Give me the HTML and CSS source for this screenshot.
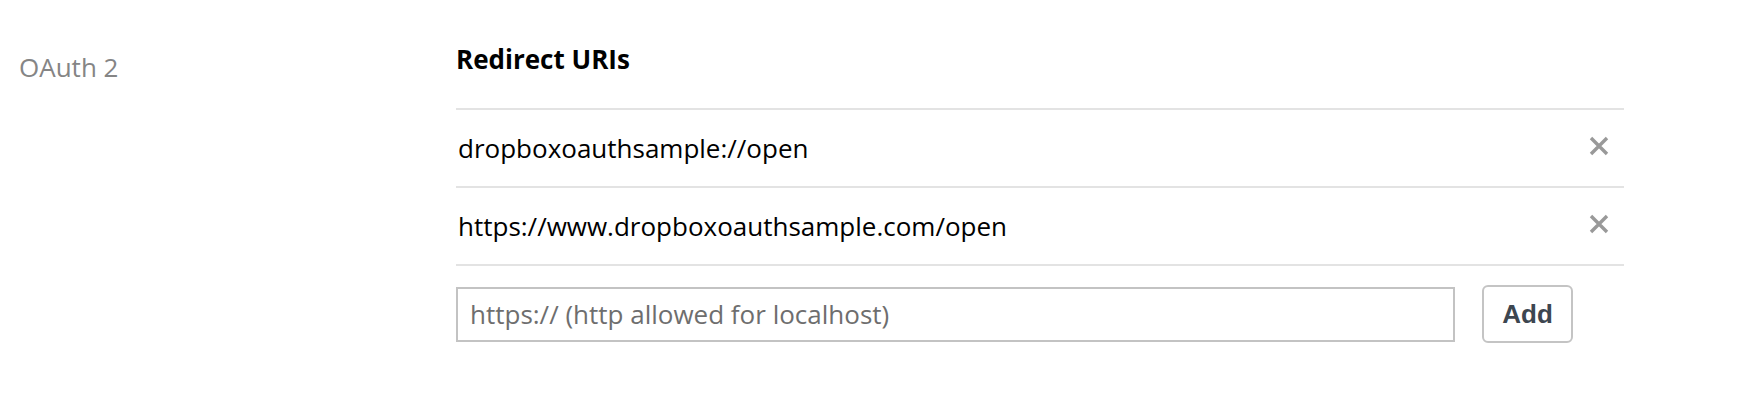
FILE: index.html
```html
<!DOCTYPE html>
<html lang="en">
<head>
<meta charset="utf-8">
<title>OAuth 2 – Redirect URIs</title>
<link rel="stylesheet" href="styles.css">
</head>
<body>
  <section class="setting">
    <div class="setting-label">OAuth 2</div>
    <div class="setting-body">
      <h3 class="setting-title">Redirect URIs</h3>
      <ul class="uri-list">
        <li class="uri-row">
          <span class="uri-text">dropboxoauthsample://open</span>
          <button class="uri-remove" type="button" aria-label="Remove">
            <svg viewBox="0 0 20 20" width="20" height="20"><path d="M2 2 L18 18 M18 2 L2 18" /></svg>
          </button>
        </li>
        <li class="uri-row">
          <span class="uri-text">https://www.dropboxoauthsample.com/open</span>
          <button class="uri-remove" type="button" aria-label="Remove">
            <svg viewBox="0 0 20 20" width="20" height="20"><path d="M2 2 L18 18 M18 2 L2 18" /></svg>
          </button>
        </li>
      </ul>
      <form class="add-row" onsubmit="return false">
        <input class="add-input" type="text" placeholder="https:// (http allowed for localhost)">
        <button class="add-button" type="submit">Add</button>
      </form>
    </div>
  </section>
</body>
</html>
```

FILE: styles.css
```css
* { box-sizing: border-box; }

html, body {
  margin: 0;
  padding: 0;
  background: #ffffff;
}

body {
  font-family: "Open Sans", "Liberation Sans", sans-serif;
  font-size: 26px;
  line-height: 36px;
  color: #000000;
}

.setting {
  display: flex;
  padding: 41px 0 0 19px;
}

.setting-label {
  width: 437px;
  flex: none;
  padding-top: 8px;
  color: #858585;
}

.setting-body {
  width: 1168px;
  flex: none;
}

.setting-title {
  margin: 0 0 31px 0;
  font-size: 26px;
  line-height: 36px;
  font-weight: 700;
}

.uri-list {
  list-style: none;
  margin: 0;
  padding: 0;
  border-bottom: 2px solid #e3e3e3;
}

.uri-row {
  display: flex;
  align-items: center;
  justify-content: space-between;
  height: 78px;
  border-top: 2px solid #e3e3e3;
  padding-left: 2px;
}

.uri-remove {
  display: flex;
  align-items: center;
  justify-content: center;
  width: 20px;
  height: 20px;
  padding: 0;
  margin: 0 15px 4px 0;
  border: none;
  background: none;
}

.uri-remove svg {
  display: block;
  stroke: #999999;
  stroke-width: 3.4;
  fill: none;
}

.add-row {
  display: flex;
  align-items: center;
  margin: 19px 0 0 0;
}

.add-input {
  width: 999px;
  height: 55px;
  border: 2px solid #c3c3c3;
  border-radius: 0;
  padding: 0 12px;
  font-family: "Open Sans", "Liberation Sans", sans-serif;
  font-size: 26px;
  color: #000;
  outline: none;
}

.add-input::placeholder {
  color: #6e6e6e;
  opacity: 1;
}

.add-button {
  width: 91px;
  height: 58px;
  margin-left: 27px;
  border: 2px solid #c4c4c4;
  border-radius: 6px;
  background: #ffffff;
  font-family: "Liberation Sans", Arial, sans-serif;
  font-weight: 700;
  font-size: 26px;
  color: #3d4650;
  padding: 0;
}
```
